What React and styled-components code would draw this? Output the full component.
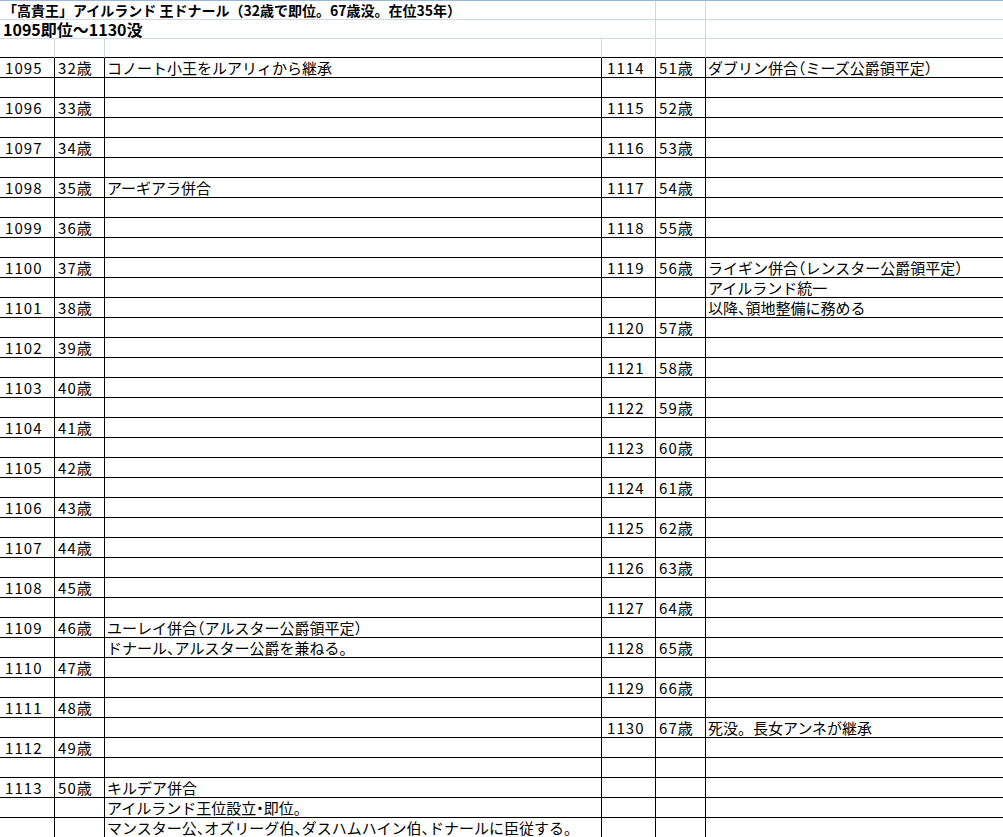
import React from 'react'
import styled, { createGlobalStyle } from 'styled-components'

const GlobalStyle = createGlobalStyle`
  html, body {
    margin: 0;
    padding: 0;
    background: #ffffff;
  }
  body {
    font-family: "Noto Sans CJK JP", "Noto Sans", sans-serif;
    color: #000;
    overflow: hidden;
  }
`

const COLS = '55px 50px 497px 54px 50px 1fr'

const Sheet = styled.div`
  width: 1003px;
  height: 837px;
  overflow: hidden;
  border-top: 1px solid #9eb6ce;
`

const Row = styled.div`
  display: grid;
  grid-template-columns: ${COLS};
  height: ${p => p.$h}px;
`

const Cell = styled.div`
  box-sizing: border-box;
  border-right: 1px solid ${p => (p.$head ? '#d0d7e5' : '#000')};
  border-bottom: 1px solid ${p => (p.$dark ? '#000' : p.$head ? '#d0d7e5' : '#000')};
  grid-column: span ${p => p.$span || 1};
  padding-left: ${p => p.$pad ?? 3}px;
  font-size: 15px;
  letter-spacing: ${p => (p.$num ? '1.1px' : '0')};
  line-height: ${p => p.$h - 1}px;
  white-space: nowrap;
  overflow: visible;
  &:last-child {
    border-right: none;
  }
`

const Title = styled(Cell)`
  font-size: ${p => p.$size}px;
  font-weight: 700;
  padding-left: 3px;
  border-right: none;
  position: relative;
  z-index: 1;
  background: #fff;
`

// proportional punctuation, the way the spreadsheet font draws it
const Half = styled.span`
  font-feature-settings: "halt";
`

function Text({ children }) {
  const parts = String(children).split(/([、・（）])/)
  return parts.map((s, i) => (/^[、・（）]$/.test(s) ? <Half key={i}>{s}</Half> : s))
}

const left = {}
const right = {}
for (let i = 0; i <= 18; i++) left[2 * i] = [String(1095 + i), `${32 + i}歳`, '']
left[0][2] = 'コノート小王をルアリィから継承'
left[6][2] = 'アーギアラ併合'
left[28][2] = 'ユーレイ併合（アルスター公爵領平定）'
left[29] = ['', '', 'ドナール、アルスター公爵を兼ねる。']
left[36][2] = 'キルデア併合'
left[37] = ['', '', 'アイルランド王位設立・即位。']
left[38] = ['', '', 'マンスター公、オズリーグ伯、ダスハムハイン伯、ドナールに臣従する。']

for (let i = 0; i <= 5; i++) right[2 * i] = [String(1114 + i), `${51 + i}歳`, '']
for (let y = 1120; y <= 1130; y++) right[13 + 2 * (y - 1120)] = [String(y), `${y - 1063}歳`, '']
right[0][2] = 'ダブリン併合（ミーズ公爵領平定）'
right[10][2] = 'ライギン併合（レンスター公爵領平定）'
right[11] = ['', '', 'アイルランド統一']
right[12] = ['', '', '以降、領地整備に務める']
right[33][2] = '死没。長女アンネが継承'

const rows = Array.from({ length: 39 }, (_, k) => [
  ...(left[k] || ['', '', '']),
  ...(right[k] || ['', '', '']),
])

export default function App() {
  return (
    <Sheet>
      <GlobalStyle />
      <Row $h={19}>
        <Title $head $span={3} $h={19} $size={14}>
          「高貴王」アイルランド 王ドナール（32歳で即位。67歳没。在位35年）
        </Title>
        <Cell $head $h={19} />
        <Cell $head $h={19} />
        <Cell $head $h={19} />
      </Row>
      <Row $h={19}>
        <Title $head $span={3} $h={19} $size={16}>
          1095即位～1130没
        </Title>
        <Cell $head $h={19} />
        <Cell $head $h={19} />
        <Cell $head $h={19} />
      </Row>
      <Row $h={19}>
        {[0, 1, 2, 3, 4, 5].map(i => (
          <Cell key={i} $head $dark $h={19} />
        ))}
      </Row>
      {rows.map((r, k) => (
        <Row key={k} $h={20}>
          {r.map((v, i) => {
            const isEvent = i === 2 || i === 5
            const isYear = i === 0 || i === 3
            return (
              <Cell key={i} $h={20} $num={!isEvent} $pad={isYear ? 5 : isEvent ? 2 : 3}>
                {isEvent ? <Text>{v}</Text> : v}
              </Cell>
            )
          })}
        </Row>
      ))}
    </Sheet>
  )
}
